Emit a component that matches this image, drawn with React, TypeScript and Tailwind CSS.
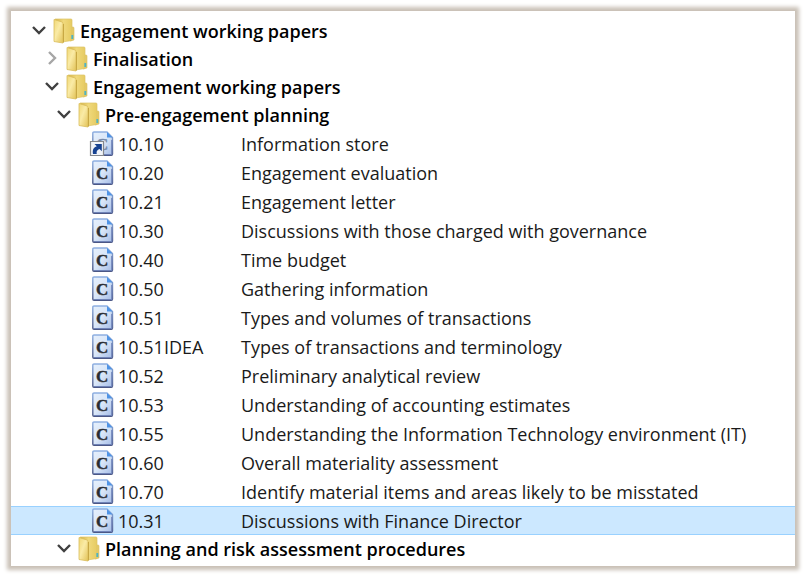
import { useState } from 'react'

const documents = [
  { ref: '10.10', title: 'Information store', shortcut: true },
  { ref: '10.20', title: 'Engagement evaluation' },
  { ref: '10.21', title: 'Engagement letter' },
  { ref: '10.30', title: 'Discussions with those charged with governance' },
  { ref: '10.40', title: 'Time budget' },
  { ref: '10.50', title: 'Gathering information' },
  { ref: '10.51', title: 'Types and volumes of transactions' },
  { ref: '10.51IDEA', title: 'Types of transactions and terminology' },
  { ref: '10.52', title: 'Preliminary analytical review' },
  { ref: '10.53', title: 'Understanding of accounting estimates' },
  { ref: '10.55', title: 'Understanding the Information Technology environment (IT)' },
  { ref: '10.60', title: 'Overall materiality assessment' },
  { ref: '10.70', title: 'Identify material items and areas likely to be misstated' },
  { ref: '10.31', title: 'Discussions with Finance Director' },
]

function Chevron({ open }: { open: boolean }) {
  return (
    <svg viewBox="0 0 16 16" className="h-4 w-4 shrink-0" fill="none" aria-hidden="true">
      {open ? (
        <path d="M2 4l6 6 6-6" stroke="#404040" strokeWidth="2.4" />
      ) : (
        <path d="M5 1l6 6-6 6" stroke="#a6a6a6" strokeWidth="2.4" />
      )}
    </svg>
  )
}

function FolderIcon() {
  return (
    <svg viewBox="0 0 22 26" className="h-[26px] w-[22px] shrink-0" aria-hidden="true">
      <defs>
        <linearGradient id="folder-front" x1="0" y1="0" x2="1" y2="1">
          <stop offset="0" stopColor="#f0d876" />
          <stop offset="0.45" stopColor="#faeba6" />
          <stop offset="1" stopColor="#e2c257" />
        </linearGradient>
        <linearGradient id="folder-back" x1="0" y1="0" x2="1" y2="0">
          <stop offset="0" stopColor="#d3b146" />
          <stop offset="0.5" stopColor="#f0d97c" />
          <stop offset="1" stopColor="#e6cb62" />
        </linearGradient>
      </defs>
      <path d="M17 9h3.500l.5 1v12l-4 1z" fill="#e6cb68" stroke="#d8bd5e" strokeWidth="0.6" />
      <path d="M2 1h16.500l.5 1V22.500L9 24z" fill="url(#folder-back)" stroke="#dcc366" strokeWidth="0.7" />
      <path d="M1 1.500l8 2.500q1 .5 1 1.500V25L1 23.500z" fill="url(#folder-front)" stroke="#d9bd5a" strokeWidth="0.8" />
      <path d="M10.500 6v18.500" stroke="#c4a440" strokeWidth="0.9" />
      <path d="M19.300 17v4" stroke="#4fb3c4" strokeWidth="1.900" />
    </svg>
  )
}

function DocumentIcon({ shortcut }: { shortcut?: boolean }) {
  return (
    <svg viewBox="0 0 26 26" className="h-[26px] w-[26px] shrink-0" aria-hidden="true">
      <defs>
        <linearGradient id="page" x1="0" y1="0" x2="1" y2="1">
          <stop offset="0" stopColor="#e6f0fc" />
          <stop offset="0.5" stopColor="#d9e6f8" />
          <stop offset="1" stopColor="#a3bbe6" />
        </linearGradient>
        <linearGradient id="page-edge" x1="0" y1="0" x2="0" y2="1">
          <stop offset="0" stopColor="#8fb0e2" />
          <stop offset="1" stopColor="#4b5785" />
        </linearGradient>
      </defs>
      <path d="M5 1h13l5.500 5.500V23q0 1.200-1.200 1.200H5q-1.200 0-1.200-1.200V2.200Q3.800 1 5 1z" fill="url(#page)" stroke="url(#page-edge)" strokeWidth="1.400" />
      <path d="M18 1l5.500 5.500H18z" fill="#4f94e6" />
      <path d="M22.800 9v14.500H5" fill="none" stroke="#6f83b8" strokeWidth="1.200" />
      <text
        x="7"
        y="19"
        fontFamily="Liberation Serif, serif"
        fontWeight="700"
        fontSize="17"
        fill={shortcut ? '#7488a8' : '#2a2d33'}
        stroke={shortcut ? '#7488a8' : '#2a2d33'}
        strokeWidth="0.4"
      >
        C
      </text>
      {shortcut && (
        <g>
          <path d="M1.500 10.500h13v14h-13z" fill="#f1f4f9" stroke="#85878c" strokeWidth="1.200" />
          <path d="M4 23c-.8-4.500.8-7 3.800-7.800L5.500 13h7.300v7.300l-2.300-2.200c-2.200.6-3.300 2.200-2.800 4.900z" fill="#174291" />
        </g>
      )}
    </svg>
  )
}

function FolderLabel({ name, open, onToggle, indent }: { name: string; open: boolean; onToggle: () => void; indent: string }) {
  return (
    <button type="button" aria-expanded={open} onClick={onToggle} className={`flex h-7 w-full items-center ${indent} text-left font-semibold`}>
      <Chevron open={open} />
      <span className="ml-1.5">
        <FolderIcon />
      </span>
      <span className="ml-[5px] whitespace-nowrap">{name}</span>
    </button>
  )
}

export default function App() {
  const [closed, setClosed] = useState<string[]>(['finalisation'])
  const [selected, setSelected] = useState('10.31')

  const isOpen = (id: string) => !closed.includes(id)
  const toggle = (id: string) =>
    setClosed((ids) => (ids.includes(id) ? ids.filter((item) => item !== id) : [...ids, id]))

  return (
    <main className="min-h-screen bg-white p-[11px] font-['Open_Sans','Noto_Sans',sans-serif] text-lg leading-7 text-black">
      <nav aria-label="Working papers" className="bg-white pt-1.5 pb-[3px] shadow-[0_0_4px_4px_#c9c0b6]">
        <ul>
          <li>
            <FolderLabel name="Engagement working papers" indent="pl-5" open={isOpen('root')} onToggle={() => toggle('root')} />
            {isOpen('root') && (
              <ul>
                <li>
                  <FolderLabel name="Finalisation" indent="pl-[33px]" open={isOpen('finalisation')} onToggle={() => toggle('finalisation')} />
                </li>
                <li>
                  <FolderLabel name="Engagement working papers" indent="pl-[33px]" open={isOpen('papers')} onToggle={() => toggle('papers')} />
                  {isOpen('papers') && (
                    <ul>
                      <li>
                        <FolderLabel name="Pre-engagement planning" indent="pl-[45px]" open={isOpen('pre')} onToggle={() => toggle('pre')} />
                        {isOpen('pre') && (
                          <ul>
                            {documents.map((doc) => (
                              <li key={doc.ref}>
                                <button
                                  type="button"
                                  aria-pressed={selected === doc.ref}
                                  onClick={() => setSelected(doc.ref)}
                                  className={`flex h-[29px] w-full items-center border-y pl-[78px] text-left text-[#1a1a1a] ${
                                    selected === doc.ref ? 'border-[#99d1ff] bg-[#cce8ff]' : 'border-transparent'
                                  }`}
                                >
                                  <DocumentIcon shortcut={doc.shortcut} />
                                  <span className="ml-[3px] w-[123px] shrink-0">{doc.ref}</span>
                                  <span className="whitespace-nowrap">{doc.title}</span>
                                </button>
                              </li>
                            ))}
                          </ul>
                        )}
                      </li>
                      <li>
                        <FolderLabel name="Planning and risk assessment procedures" indent="pl-[45px]" open={isOpen('risk')} onToggle={() => toggle('risk')} />
                      </li>
                    </ul>
                  )}
                </li>
              </ul>
            )}
          </li>
        </ul>
      </nav>
    </main>
  )
}
